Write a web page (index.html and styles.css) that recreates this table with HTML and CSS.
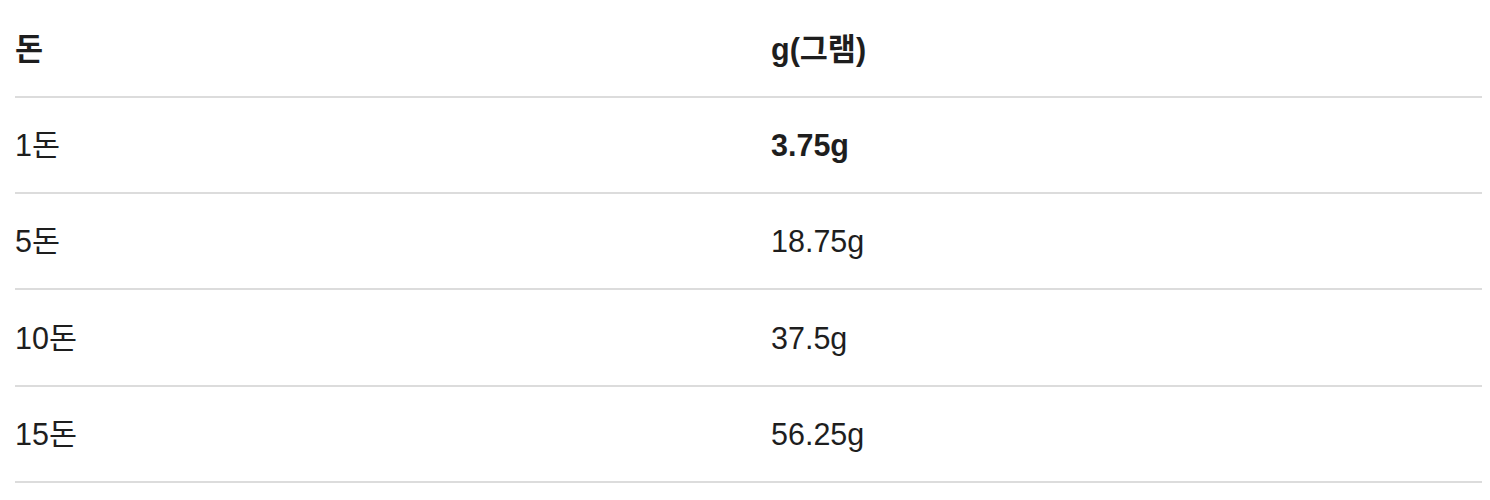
FILE: index.html
```html
<!DOCTYPE html>
<html lang="ko">
<head>
<meta charset="utf-8">
<title>돈 - 그램 환산표</title>
<link rel="stylesheet" href="styles.css">
</head>
<body>
<div class="wrap">
  <div class="table">
    <div class="row head"><div class="cell">돈</div><div class="cell">g(그램)</div></div>
    <div class="row"><div class="cell">1돈</div><div class="cell strong">3.75g</div></div>
    <div class="row"><div class="cell">5돈</div><div class="cell">18.75g</div></div>
    <div class="row"><div class="cell">10돈</div><div class="cell">37.5g</div></div>
    <div class="row"><div class="cell">15돈</div><div class="cell">56.25g</div></div>
  </div>
</div>
</body>
</html>
```
FILE: styles.css
```css
html, body {
  margin: 0;
  padding: 0;
  background: #ffffff;
}
body {
  font-family: "Liberation Sans", Arial, "Noto Sans CJK KR", sans-serif;
  font-size: 30.5px;
  color: #1e1e1e;
}
.wrap {
  padding: 1.2px 8px 0 15px;
}
.table {
  display: flex;
  flex-direction: column;
}
.row {
  display: grid;
  grid-template-columns: 756px 1fr;
  align-items: center;
  height: 94.4px;
  border-bottom: 2px solid #dcdcdc;
}
.cell {
  line-height: 1.2;
  padding-top: 1px;
}
.head .cell,
.strong {
  font-weight: bold;
}
```
